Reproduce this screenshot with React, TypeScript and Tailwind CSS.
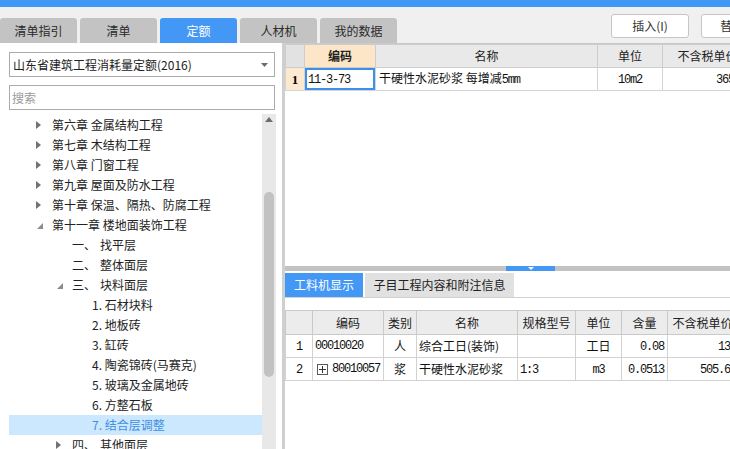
import React from 'react';

const TABS = ['清单指引', '清单', '定额', '人材机', '我的数据'];

type TreeNode = { pre?: string; label: string; lv: 0 | 1 | 2; arrow?: 'closed' | 'open'; sel?: boolean };

const TREE: TreeNode[] = [
  { label: '第六章 金属结构工程', lv: 0, arrow: 'closed' },
  { label: '第七章 木结构工程', lv: 0, arrow: 'closed' },
  { label: '第八章 门窗工程', lv: 0, arrow: 'closed' },
  { label: '第九章 屋面及防水工程', lv: 0, arrow: 'closed' },
  { label: '第十章 保温、隔热、防腐工程', lv: 0, arrow: 'closed' },
  { label: '第十一章 楼地面装饰工程', lv: 0, arrow: 'open' },
  { pre: '一、', label: '找平层', lv: 1 },
  { pre: '二、', label: '整体面层', lv: 1 },
  { pre: '三、', label: '块料面层', lv: 1, arrow: 'open' },
  { label: '1. 石材块料', lv: 2 },
  { label: '2. 地板砖', lv: 2 },
  { label: '3. 缸砖', lv: 2 },
  { label: '4. 陶瓷锦砖(马赛克)', lv: 2 },
  { label: '5. 玻璃及金属地砖', lv: 2 },
  { label: '6. 方整石板', lv: 2 },
  { label: '7. 结合层调整', lv: 2, sel: true },
  { pre: '四、', label: '其他面层', lv: 1, arrow: 'closed' },
];

const INDENT = { 0: 'pl-[23px]', 1: 'pl-[43px]', 2: 'pl-[63px]' };

// half-width digits in the grid, ~6px per glyph
const mono = "font-['Liberation_Mono',monospace] text-[12px] tracking-[-1.2px]";

function Arrow({ kind }: { kind?: 'closed' | 'open' }) {
  if (kind === 'closed')
    return (
      <svg width="5" height="8" viewBox="0 0 5 8" className="ml-[4px]">
        <path d="M0 0L5 4L0 8Z" fill="#727272" />
      </svg>
    );
  if (kind === 'open')
    return (
      <svg width="6" height="6" viewBox="0 0 6 6" className="ml-[5px] mt-[2px]">
        <path d="M6 0V6H0Z" fill="#8c8c8c" />
      </svg>
    );
  return null;
}

function LeftPanel() {
  return (
    <div className="w-[282px] h-full bg-white pl-[9px] flex flex-col">
      <div className="mt-[9px] w-[266px] h-[25px] border border-[#ababab] flex items-center pl-[3px] pr-[6px] text-[12px] text-[#222]">
        <span className="flex-1">山东省建筑工程消耗量定额(2016)</span>
        <svg width="7" height="4" viewBox="0 0 7 4">
          <path d="M0 0H7L3.5 4Z" fill="#6a6a6a" />
        </svg>
      </div>
      <div className="mt-[8px] w-[266px] h-[25px] border border-[#ababab] flex items-center pl-[2px] text-[12px] text-[#9a9a9a]">
        搜索
      </div>
      <div className="mt-[4px] flex flex-1 min-h-0">
        <div className="w-[253px] pt-[1px]">
          {TREE.map((n, i) => (
            <div
              key={i}
              className={`h-[20px] flex items-center text-[12px] whitespace-nowrap ${INDENT[n.lv]} ${
                n.sel ? 'bg-[#cce8ff] text-[#3f8fe2]' : 'text-[#222]'
              }`}
            >
              <div className="w-[20px] flex items-center">
                <Arrow kind={n.arrow} />
              </div>
              {n.pre && <span className="mr-[4px]">{n.pre}</span>}
              <span>{n.label}</span>
            </div>
          ))}
        </div>
        <div className="w-[14px] bg-[#e8e8e8] flex flex-col items-center">
          <svg width="8" height="5" viewBox="0 0 8 5" className="mt-[3px]">
            <path d="M0 5H8L4 0Z" fill="#6e6e6e" />
          </svg>
          <div className="mt-[70px] w-[10px] h-[185px] rounded-[5px] bg-[#c2c2c2]" />
        </div>
      </div>
    </div>
  );
}

function TopTable() {
  const th = 'border border-[#cdcdcd] bg-[#e9e9e9] font-normal text-center text-[#222]';
  const td = 'border border-[#d4d4d4] text-[#111]';
  return (
    <table className="table-fixed border-collapse w-[467px] text-[12px]">
      <colgroup>
        <col className="w-[19px]" />
        <col className="w-[71px]" />
        <col className="w-[222px]" />
        <col className="w-[65px]" />
        <col className="w-[90px]" />
      </colgroup>
      <thead>
        <tr className="h-[23px]">
          <th className="border border-[#cdcdcd] bg-[#e2e2e2]" />
          <th className="border border-[#cdcdcd] bg-[#fde6c7] font-bold text-center text-[#222]">编码</th>
          <th className={th}>名称</th>
          <th className={th}>单位</th>
          <th className={`${th} whitespace-nowrap`}>不含税单价</th>
        </tr>
      </thead>
      <tbody>
        <tr className="h-[23px]">
          <td className="border border-[#d4d4d4] bg-[#fde9cf] text-center font-bold font-['Liberation_Serif',serif] text-[13px]">1</td>
          <td className={`${td} pl-[3px] shadow-[inset_0_0_0_2px_#3d90e8]`}>
            <span className={mono}>11-3-73</span>
          </td>
          <td className={`${td} pl-[3px] whitespace-nowrap`}>
            干硬性水泥砂浆 每增减<span className={mono}>5mm</span>
          </td>
          <td className={`${td} text-center`}>
            <span className={mono}>10m2</span>
          </td>
          <td className={`${td} text-right pr-0 whitespace-nowrap`}>
            <span className={mono}>365.80</span>
          </td>
        </tr>
      </tbody>
    </table>
  );
}

const ROWS = [
  { n: '1', code: '00010020', plus: false, kind: '人', name: '综合工日(装饰)', spec: '', unit: '工日', unitMono: false, qty: '0.08', price: '138' },
  { n: '2', code: '80010057', plus: true, kind: '浆', name: '干硬性水泥砂浆', spec: '1:3', unit: 'm3', unitMono: true, qty: '0.0513', price: '505.63' },
];

function BottomTable() {
  const th = 'border border-[#c9c9c9] bg-[#ececec] font-normal text-center text-[#222] whitespace-nowrap';
  const td = 'border border-[#d2d2d2] text-[#111] whitespace-nowrap overflow-hidden';
  return (
    <table className="table-fixed border-collapse w-[452px] text-[12px]">
      <colgroup>
        <col className="w-[27px]" />
        <col className="w-[71px]" />
        <col className="w-[33px]" />
        <col className="w-[101px]" />
        <col className="w-[58px]" />
        <col className="w-[46px]" />
        <col className="w-[46px]" />
        <col className="w-[70px]" />
      </colgroup>
      <thead>
        <tr className="h-[24px]">
          <th className={th} />
          <th className={th}>编码</th>
          <th className={th}>类别</th>
          <th className={th}>名称</th>
          <th className={th}>规格型号</th>
          <th className={th}>单位</th>
          <th className={th}>含量</th>
          <th className={th}>不含税单价</th>
        </tr>
      </thead>
      <tbody>
        {ROWS.map((r) => (
          <tr key={r.n} className="h-[23px]">
            <td className={`${td} text-center`}>
              <span className={mono}>{r.n}</span>
            </td>
            <td className={`${td} pl-[2px]`}>
              <div className="flex items-center">
                {r.plus && (
                  <span className="mr-[4px] ml-[2px] w-[11px] h-[11px] border border-[#5a5a5a] flex items-center justify-center">
                    <svg width="7" height="7" viewBox="0 0 7 7">
                      <path d="M3.5 0V7M0 3.5H7" stroke="#333" strokeWidth="1" />
                    </svg>
                  </span>
                )}
                <span className={mono}>{r.code}</span>
              </div>
            </td>
            <td className={`${td} text-center`}>{r.kind}</td>
            <td className={`${td} pl-[2px]`}>{r.name}</td>
            <td className={`${td} pl-[2px]`}>
              <span className={mono}>{r.spec}</span>
            </td>
            <td className={`${td} text-center`}>
              {r.unitMono ? <span className={mono}>{r.unit}</span> : r.unit}
            </td>
            <td className={`${td} text-right pr-[3px]`}>
              <span className={mono}>{r.qty}</span>
            </td>
            <td className={`${td} text-right pr-[1px]`}>
              <span className={mono}>{r.price}</span>
            </td>
          </tr>
        ))}
      </tbody>
    </table>
  );
}

function RightPanel() {
  return (
    <div className="flex-1 min-w-0 h-full bg-white border-l border-[#d0d0d0] overflow-hidden flex flex-col">
      <div className="h-[223px] border-t border-[#c9c9c9]">
        <TopTable />
      </div>
      <div className="h-[5px] bg-[#c3c3c3] flex pl-[221px]">
        <div className="w-[49px] h-full bg-[#4398f5] flex items-center justify-center">
          <svg width="6" height="3" viewBox="0 0 6 3">
            <path d="M0 0H6L3 3Z" fill="#fff" />
          </svg>
        </div>
      </div>
      <div className="mt-[2px] h-[25px] flex gap-[2px] border-b border-[#d2d2d2] text-[12px]">
        <div className="w-[78px] bg-[#4398f5] text-white flex items-center justify-center">工料机显示</div>
        <div className="w-[149px] bg-[#e1e1e1] text-[#222] flex items-center justify-center">子目工程内容和附注信息</div>
      </div>
      <div className="mt-[12px]">
        <BottomTable />
      </div>
    </div>
  );
}

export default function App() {
  return (
    <div className="w-[730px] h-[449px] overflow-hidden bg-[#f0f0f0] flex flex-col font-['Noto_Sans_CJK_SC','Microsoft_YaHei',sans-serif] leading-none">
      <div className="h-[7px] bg-[#3f97f6] shrink-0" />
      <div className="h-[36px] shrink-0 flex">
        <div className="flex gap-[3px] items-end">
          {TABS.map((t) => (
            <div
              key={t}
              className={`w-[77px] h-[25px] rounded-t-[3px] flex items-center justify-center text-[12px] ${
                t === '定额' ? 'bg-[#4398f5] text-white' : 'bg-[#c3c3c3] text-[#2a2a2a]'
              }`}
            >
              {t}
            </div>
          ))}
        </div>
        <div className="ml-[214px] mt-[7px] flex gap-[12px]">
          <div className="w-[78px] h-[24px] bg-white border border-[#c6c6c6] rounded-[3px] flex items-center justify-center text-[12px] text-[#333]">
            插入(I)
          </div>
          <div className="w-[78px] h-[24px] bg-white border border-[#c6c6c6] rounded-[3px] flex items-center justify-center text-[12px] text-[#333]">
            替换(R)
          </div>
        </div>
      </div>
      <div className="flex-1 min-h-0 flex">
        <LeftPanel />
        <div className="w-[2px] h-full bg-[#cfcfcf]" />
        <RightPanel />
      </div>
    </div>
  );
}
